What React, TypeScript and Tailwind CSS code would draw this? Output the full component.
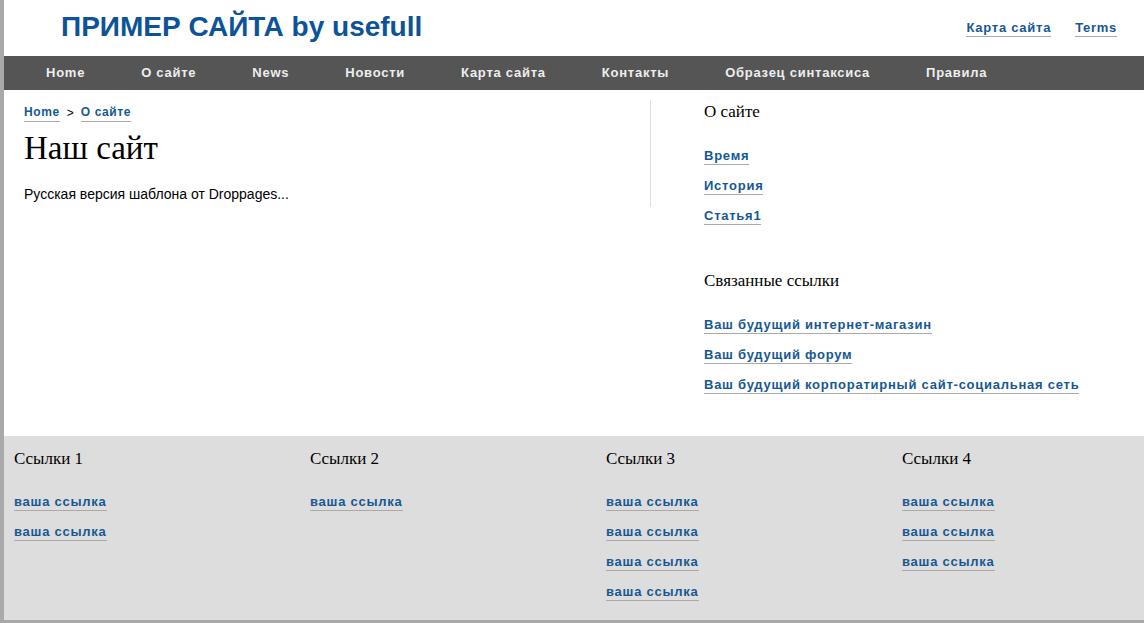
const NAV = ['Home', 'О сайте', 'News', 'Новости', 'Карта сайта', 'Контакты', 'Образец синтаксиса', 'Правила'];

const FOOTER = [
  { title: 'Ссылки 1', count: 2 },
  { title: 'Ссылки 2', count: 1 },
  { title: 'Ссылки 3', count: 4 },
  { title: 'Ссылки 4', count: 3 },
];

const sans = { fontFamily: '"Liberation Sans", Arial, sans-serif' };
const serif = { fontFamily: '"Liberation Serif", "Times New Roman", serif' };

function Link({ children, small }: { children: React.ReactNode; small?: boolean }) {
  return (
    <a
      href="#"
      className={`${small ? 'text-[12px] tracking-[0.6px]' : 'text-[13px] tracking-[0.75px]'} font-bold text-[#165893] border-b border-[#aaaaaa] leading-[15px] pb-px no-underline`}
      style={sans}
    >
      {children}
    </a>
  );
}

export default function App() {
  return (
    <div className="w-[1144px] h-[623px] overflow-hidden bg-white flex flex-col border-l-4 border-b-[3px] border-[#a9a9a9]" style={sans}>
      {/* Header */}
      <div className="h-[56px] flex items-center justify-between pl-[57px] pr-[27px] shrink-0">
        <h1 className="text-[28px] font-bold text-[#0c5497] leading-none -mt-[2px]" style={sans}>
          ПРИМЕР САЙТА by usefull
        </h1>
        <div className="flex gap-[24px] mt-[1px]">
          <Link>Карта сайта</Link>
          <Link>Terms</Link>
        </div>
      </div>

      {/* Nav */}
      <nav className="h-[34px] bg-[#555555] flex items-center pl-[14px] shrink-0">
        {NAV.map((n) => (
          <span key={n} className="px-[28px] text-[13px] font-bold tracking-[0.75px] text-[#eeeeee]">
            {n}
          </span>
        ))}
      </nav>

      {/* Main */}
      <div className="flex-1 flex pt-[10px]">
        <div className="w-[647px] self-start border-r border-[#dddddd] pl-[20px] pt-[4px] h-[107px]">
          <div className="flex items-center gap-[7px] text-[12px]">
            <Link small>Home</Link>
            <span className="text-black">&gt;</span>
            <Link small>О сайте</Link>
          </div>
          <h2 className="text-[33px] text-black leading-none mt-[10px]" style={serif}>
            Наш сайт
          </h2>
          <p className="text-[14px] text-black mt-[19px]">Русская версия шаблона от Droppages...</p>
        </div>
        <div className="pl-[53px] pt-[2px] flex flex-col">
          <h3 className="text-[17px] text-black leading-[20px]" style={serif}>О сайте</h3>
          <div className="flex flex-col items-start gap-[13px] mt-[26px]">
            <Link>Время</Link>
            <Link>История</Link>
            <Link>Статья1</Link>
          </div>
          <h3 className="text-[17px] text-black leading-[20px] mt-[46px]" style={serif}>Связанные ссылки</h3>
          <div className="flex flex-col items-start gap-[13px] mt-[26px]">
            <Link>Ваш будущий интернет-магазин</Link>
            <Link>Ваш будущий форум</Link>
            <Link>Ваш будущий корпоратирный сайт-социальная сеть</Link>
          </div>
        </div>
      </div>

      {/* Footer */}
      <div className="h-[184px] bg-[#dddddd] flex pl-[10px] pt-[13px] shrink-0">
        {FOOTER.map((col) => (
          <div key={col.title} className="w-[296px] shrink-0 flex flex-col items-start">
            <h4 className="text-[17px] text-black leading-[20px]" style={serif}>{col.title}</h4>
            <div className="flex flex-col items-start gap-[13px] mt-[25px]">
              {Array.from({ length: col.count }).map((_, i) => (
                <Link key={i}>ваша ссылка</Link>
              ))}
            </div>
          </div>
        ))}
      </div>
    </div>
  );
}
